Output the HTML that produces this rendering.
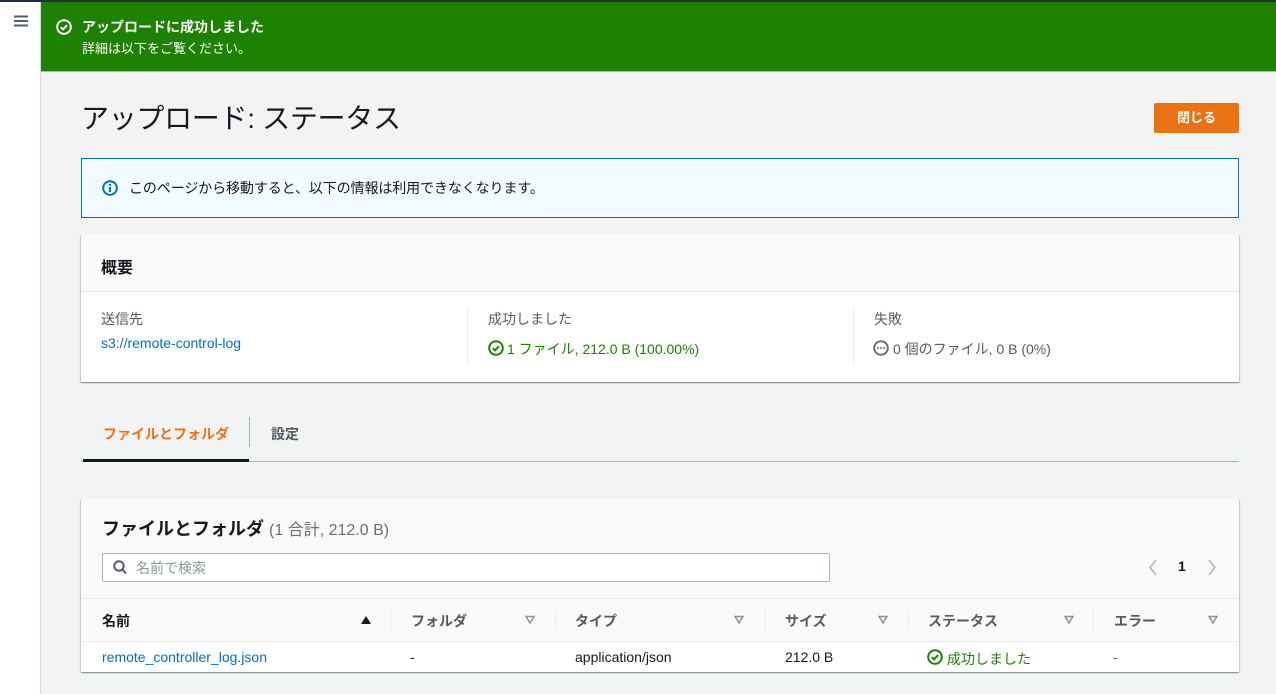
<!DOCTYPE html>
<html><head><meta charset="utf-8"><style>
*{margin:0;padding:0;box-sizing:border-box}
body{width:1276px;height:694px;overflow:hidden;background:#f2f3f3;font-family:"Liberation Sans","Noto Sans CJK JP",sans-serif;font-size:14px;color:#16191f;position:relative}
.a{position:absolute;white-space:nowrap}
.link{color:#0073bb}
.card{position:absolute;background:#fff;box-shadow:0 1px 1px rgba(0,28,36,.3),1px 1px 1px rgba(0,28,36,.15),-1px 1px 1px rgba(0,28,36,.15)}
.tri{font-size:11px;color:#879596}
</style></head><body>
<div class="a" style="left:0;top:0;width:1276px;height:2px;background:#232f3e"></div>
<div class="a" style="left:0;top:2px;width:41px;height:692px;background:#fff;border-right:1px solid #d5dbdb"></div>
<svg class="a" style="left:14px;top:15px" width="14" height="12"><path d="M0 1.5H14M0 6H14M0 10.5H14" stroke="#545b64" stroke-width="2"/></svg>
<div class="a" style="left:41px;top:2px;width:1235px;height:70px;background:#1d8102;border-bottom:1px solid #aab7b8"></div>
<svg class="a" style="left:56px;top:19px" width="16" height="16"><circle cx="8" cy="8" r="6.8" fill="none" stroke="#fff" stroke-width="2"/><path d="M4.8 8.2l2.2 2.2 4-4.2" fill="none" stroke="#fff" stroke-width="2"/></svg>
<div class="a" style="left:82px;top:17px;color:#fff;font-weight:bold;font-size:14px">アップロードに成功しました</div>
<div class="a" style="left:82px;top:38px;color:#fff;font-size:13px">詳細は以下をご覧ください。</div>
<div class="a" style="left:81px;top:97px;font-size:28px;letter-spacing:-0.3px">アップロード: ステータス</div>
<div class="a" style="left:1154px;top:103px;width:85px;height:30px;background:#ec7211;border-radius:2px;color:#fff;font-weight:bold;font-size:13px;text-align:center;line-height:30px">閉じる</div>
<div class="a" style="left:81px;top:158px;width:1158px;height:60px;background:#f1faff;border:1px solid #0073bb"></div>
<svg class="a" style="left:102px;top:180px" width="16" height="16"><circle cx="8" cy="8" r="6.8" fill="none" stroke="#0073bb" stroke-width="2"/><path d="M8 7v5M8 4v1.8" stroke="#0073bb" stroke-width="2"/></svg>
<div class="a" style="left:129px;top:178px;letter-spacing:-0.1px">このページから移動すると、以下の情報は利用できなくなります。</div>
<div class="card" style="left:81px;top:234px;width:1158px;height:148px">
 <div class="a" style="left:0;top:0;width:1158px;height:58px;background:#fafafa;border-bottom:1px solid #eaeded"></div>
 <div class="a" style="left:20px;top:20px;font-weight:bold;font-size:16px">概要</div>
 <div class="a" style="left:20px;top:75px;color:#545b64">送信先</div>
 <div class="a link" style="left:20px;top:101px">s3://remote-control-log</div>
 <div class="a" style="left:386px;top:74px;width:1px;height:56px;background:#eaeded"></div>
 <div class="a" style="left:407px;top:75px;color:#545b64">成功しました</div>
 <svg class="a" style="left:407px;top:106px" width="16" height="16"><circle cx="8" cy="8" r="6.8" fill="none" stroke="#1d8102" stroke-width="2"/><path d="M4.8 8.2l2.2 2.2 4-4.2" fill="none" stroke="#1d8102" stroke-width="2"/></svg>
 <div class="a" style="left:426px;top:105px;color:#1d8102">1 ファイル, 212.0 B (100.00%)</div>
 <div class="a" style="left:772px;top:74px;width:1px;height:56px;background:#eaeded"></div>
 <div class="a" style="left:793px;top:75px;color:#545b64">失敗</div>
 <svg class="a" style="left:792px;top:106px" width="16" height="16"><circle cx="8" cy="8" r="6.8" fill="none" stroke="#687078" stroke-width="2"/><circle cx="5" cy="8" r="1" fill="#687078"/><circle cx="8" cy="8" r="1" fill="#687078"/><circle cx="11" cy="8" r="1" fill="#687078"/></svg>
 <div class="a" style="left:812px;top:105px;color:#545b64">0 個のファイル, 0 B (0%)</div>
</div>
<div class="a" style="left:103px;top:424px;color:#ec7211;font-weight:bold;font-size:14px">ファイルとフォルダ</div>
<div class="a" style="left:249px;top:417px;width:1px;height:30px;background:#aab7b8"></div>
<div class="a" style="left:271px;top:424px;font-weight:bold;color:#545b64">設定</div>
<div class="a" style="left:81px;top:461px;width:1158px;height:1px;background:#aab7b8"></div>
<div class="a" style="left:83px;top:459px;width:166px;height:3px;background:#16191f"></div>
<div class="card" style="left:81px;top:499px;width:1158px;height:173px">
 <div class="a" style="left:0;top:0;width:1158px;height:143px;background:#fafafa"></div>
 <div class="a" style="left:21px;top:16px;font-weight:bold;font-size:18px">ファイルとフォルダ <span style="font-weight:normal;color:#687078;font-size:16px">(1 合計, 212.0 B)</span></div>
 <div class="a" style="left:21px;top:54px;width:728px;height:29px;background:#fff;border:1px solid #aab7b8;border-radius:2px"></div>
 <svg class="a" style="left:32px;top:61px" width="14" height="15"><circle cx="6" cy="6" r="4.7" fill="none" stroke="#545b64" stroke-width="2"/><path d="M9.5 9.5l3.5 4" stroke="#545b64" stroke-width="2"/></svg>
 <div class="a" style="left:55px;top:59px;color:#879596">名前で検索</div>
 <svg class="a" style="left:1067px;top:60px" width="10" height="17"><path d="M8 1L2 8.5 8 16" fill="none" stroke="#aab7b8" stroke-width="1.5"/></svg>
 <div class="a" style="left:1097px;top:59px;font-weight:bold">1</div>
 <svg class="a" style="left:1126px;top:60px" width="10" height="17"><path d="M2 1l6 7.5L2 16" fill="none" stroke="#aab7b8" stroke-width="1.5"/></svg>
 <div class="a" style="left:0;top:99px;width:1158px;height:1px;background:#eaeded"></div>
 <div class="a" style="left:0;top:142px;width:1158px;height:1px;background:#eaeded"></div>
 <div class="a" style="left:21px;top:112px;font-weight:bold">名前</div>
 <svg class="a" style="left:279px;top:116px" width="12" height="10"><path d="M1 9L6 1 11 9Z" fill="#16191f"/></svg>
 <div class="a" style="left:309px;top:110px;width:1px;height:22px;background:#eaeded"></div>
 <div class="a" style="left:330px;top:112px;font-weight:bold;color:#545b64">フォルダ</div>
 <svg class="a tri2" style="left:444px;top:116px" width="10" height="9"><path d="M1 1.5H9L5 8Z" fill="none" stroke="#879596" stroke-width="1.5"/></svg>
 <div class="a" style="left:474px;top:110px;width:1px;height:22px;background:#eaeded"></div>
 <div class="a" style="left:494px;top:112px;font-weight:bold;color:#545b64">タイプ</div>
 <svg class="a" style="left:653px;top:116px" width="10" height="9"><path d="M1 1.5H9L5 8Z" fill="none" stroke="#879596" stroke-width="1.5"/></svg>
 <div class="a" style="left:684px;top:110px;width:1px;height:22px;background:#eaeded"></div>
 <div class="a" style="left:704px;top:112px;font-weight:bold;color:#545b64">サイズ</div>
 <svg class="a" style="left:797px;top:116px" width="10" height="9"><path d="M1 1.5H9L5 8Z" fill="none" stroke="#879596" stroke-width="1.5"/></svg>
 <div class="a" style="left:827px;top:110px;width:1px;height:22px;background:#eaeded"></div>
 <div class="a" style="left:847px;top:112px;font-weight:bold;color:#545b64">ステータス</div>
 <svg class="a" style="left:983px;top:116px" width="10" height="9"><path d="M1 1.5H9L5 8Z" fill="none" stroke="#879596" stroke-width="1.5"/></svg>
 <div class="a" style="left:1012px;top:110px;width:1px;height:22px;background:#eaeded"></div>
 <div class="a" style="left:1033px;top:112px;font-weight:bold;color:#545b64">エラー</div>
 <svg class="a" style="left:1127px;top:116px" width="10" height="9"><path d="M1 1.5H9L5 8Z" fill="none" stroke="#879596" stroke-width="1.5"/></svg>
 <div class="a link" style="left:21px;top:150px">remote_controller_log.json</div>
 <div class="a" style="left:329px;top:150px">-</div>
 <div class="a" style="left:494px;top:150px">application/json</div>
 <div class="a" style="left:704px;top:150px">212.0 B</div>
 <svg class="a" style="left:846px;top:150px" width="16" height="16"><circle cx="8" cy="8" r="6.8" fill="none" stroke="#1d8102" stroke-width="2"/><path d="M4.8 8.2l2.2 2.2 4-4.2" fill="none" stroke="#1d8102" stroke-width="2"/></svg>
 <div class="a" style="left:866px;top:150px;color:#1d8102">成功しました</div>
 <div class="a" style="left:1032px;top:150px;color:#545b64">-</div>
</div>
</body></html>
